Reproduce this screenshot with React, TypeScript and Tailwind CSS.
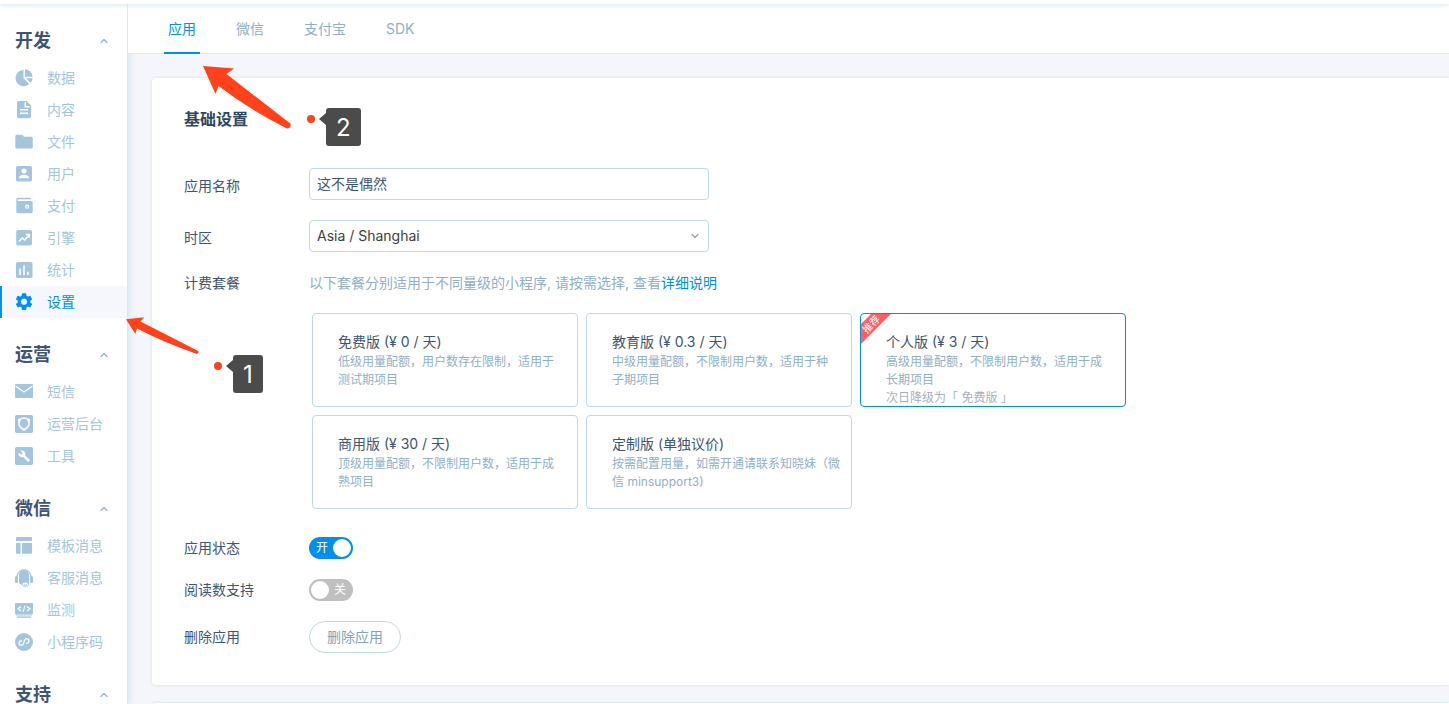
import { useState, type ReactNode } from 'react';
import { ChevronDown, ChevronUp } from 'lucide-react';
import { clsx } from 'clsx';

const icons: Record<string, ReactNode> = {
  data: (
    <>
      <path d="M8.5 1v8.3l5.7 5.7A8.1 8.1 0 1 1 8.5 1z" />
      <path d="M10 .3A8 8 0 0 1 17.6 7.8H10z" />
      <path d="M11 9.3h6.6a8 8 0 0 1-2 4.7z" />
    </>
  ),
  content: (
    <>
      <path d="M3.6 0h8L16 4.5v11a1.7 1.7 0 0 1-1.7 1.7H3.6A1.7 1.7 0 0 1 2 15.5v-14A1.6 1.6 0 0 1 3.6 0z" />
      <path d="M10.3 1.3v4.4h4.4M5 8.8h8M5 12.3h8" fill="none" stroke="#fff" strokeWidth="1.5" />
    </>
  ),
  file: <path d="M2 1.8h5l2 2h7.2a1.6 1.6 0 0 1 1.6 1.6V14a1.6 1.6 0 0 1-1.6 1.6H1.8A1.6 1.6 0 0 1 .3 14V3.4A1.6 1.6 0 0 1 2 1.8z" />,
  user: (
    <>
      <rect x="1" y="1" width="16" height="15.5" rx="1.8" />
      <circle cx="9" cy="6" r="2.5" fill="#fff" />
      <path d="M4 13.200v-.8c0-1.7 3.3-2.6 5-2.6s5 .9 5 2.6v.8z" fill="#fff" />
    </>
  ),
  pay: (
    <>
      <path d="M3 .8h12.5v1.6H3a1 1 0 0 0 0 1.5h13.2a1.5 1.5 0 0 1 1.5 1.5v9.3a1.5 1.5 0 0 1-1.5 1.5H2.8a1.5 1.5 0 0 1-1.500-1.500V2.5A1.7 1.7 0 0 1 3 .8z" />
      <path d="M3 3.2h14" stroke="#fff" strokeWidth="1.2" />
      <circle cx="12.2" cy="9.7" r="1.5" fill="none" stroke="#fff" strokeWidth="1.3" />
    </>
  ),
  engine: (
    <>
      <rect x="1.2" y="1" width="15.8" height="15.5" rx="1.8" />
      <path d="M4 12.5 7.2 9l2.5 2 4.300-4.800M10.800 5.500h3.500v3.200" fill="none" stroke="#fff" strokeWidth="1.5" />
    </>
  ),
  stats: (
    <>
      <rect x="1" y="1" width="16.5" height="16" rx="1.8" />
      <path d="M5 7.500v6.500M9 4.500v9.500M13 10.800v3.200" stroke="#fff" strokeWidth="1.6" />
    </>
  ),
  settings: (
    <path
      transform="translate(-1.4 -1.8) scale(.87)"
      d="M19.140 12.940c.04-.3.06-.61.06-.94 0-.32-.02-.64-.07-.94l2.030-1.580c.18-.14.23-.41.12-.61l-1.920-3.320c-.12-.22-.37-.29-.59-.22l-2.390.96c-.5-.38-1.030-.7-1.620-.94l-.36-2.540c-.04-.24-.24-.41-.48-.41h-3.840c-.24 0-.43.17-.47.41l-.36 2.540c-.59.24-1.130.57-1.620.94l-2.390-.96c-.22-.08-.47 0-.59.22L2.740 8.870c-.12.21-.08.47.12.61l2.030 1.580c-.05.3-.09.63-.09.94s.02.64.07.94l-2.030 1.580c-.18.14-.23.41-.12.61l1.920 3.320c.12.22.37.29.59.22l2.390-.96c.5.38 1.030.7 1.620.94l.36 2.540c.05.24.24.41.48.41h3.840c.24 0 .44-.17.47-.41l.36-2.540c.59-.24 1.130-.56 1.620-.94l2.390.96c.22.08.47 0 .59-.22l1.920-3.320c.12-.22.07-.47-.12-.61l-2.010-1.580zM12 15.600c-1.980 0-3.600-1.620-3.600-3.600s1.620-3.600 3.600-3.600 3.600 1.620 3.600 3.600-1.620 3.600-3.600 3.600z"
    />
  ),
  sms: (
    <>
      <rect y="1" width="18" height="14" rx="1" />
      <path d="M.5 3 9 9l8.500-6" fill="none" stroke="#fff" strokeWidth="1.2" />
    </>
  ),
  admin: (
    <>
      <rect width="18" height="18" rx="1.8" />
      <path d="M5 4.500C2.500 8 4 13 9 14.500c5-1.500 6.500-6.500 4-10C11 2.500 7 2.500 5 4.500z" fill="none" stroke="#fff" strokeWidth="1.4" />
      <circle cx="4.400" cy="5" r="1.500" fill="#fff" />
      <circle cx="13.600" cy="5" r="1.500" fill="#fff" />
      <circle cx="9" cy="14.500" r="1.600" fill="#fff" />
    </>
  ),
  tool: (
    <>
      <rect width="18" height="18" rx="1.8" />
      <path
        transform="translate(3 3) scale(.52)"
        fill="#fff"
        d="M22.700 19l-9.100-9.100c.9-2.300.4-5-1.500-6.900-2-2-5-2.400-7.400-1.300L9 6 6 9 1.600 4.700C.4 7.100.9 10.100 2.900 12.100c1.900 1.900 4.600 2.400 6.900 1.500l9.100 9.100c.4.4 1 .4 1.400 0l2.300-2.300c.5-.4.5-1.100.1-1.400z"
      />
    </>
  ),
  template: (
    <>
      <path d="M2 0h14a1 1 0 0 1 1 1v3H1V1a1 1 0 0 1 1-1z" />
      <path d="M1 6h4.500v10.800H2a1 1 0 0 1-1-1z" />
      <path d="M7 6h10v9.800a1 1 0 0 1-1 1H7z" />
    </>
  ),
  service: (
    <>
      <path d="M4 6a5 5 0 0 1 10 0v8.500c-1 .8-2 1-3 1H7c-1.800 0-3-1-3-2.500z" />
      <path d="M2 8C2 3.800 5 .8 9 .8S16 3.800 16 8" fill="none" stroke="currentColor" strokeWidth="1.2" />
      <rect y="7" width="3" height="7" rx="1.3" />
      <rect x="15" y="7" width="3" height="7" rx="1.3" />
      <ellipse cx="10.500" cy="15.200" rx="3.300" ry="2.200" fill="#fff" stroke="currentColor" />
      <path d="M8.800 15.600c1 .8 2.400.7 3.400-.8" fill="none" stroke="currentColor" />
    </>
  ),
  monitor: (
    <>
      <rect y="2" width="18" height="11.5" rx="1" />
      <path d="M6 5.500 3 7.800 6 10M12 5.500l3 2.300-3 2.200M9.800 4.800 8.200 10.800" fill="none" stroke="#fff" strokeWidth="1.1" />
      <path d="M1 13.500h16v2H1z" opacity=".5" />
      <path d="M2 15.500h14v1.300H2z" />
    </>
  ),
  qrcode: (
    <>
      <circle cx="9" cy="9" r="9" />
      <path
        d="M6.300 8.900a2.200 2.200 0 1 0 2.700 2.200V6.900a2.200 2.200 0 1 1 2.700 2.200"
        transform="rotate(22 9 9)"
        fill="none"
        stroke="#fff"
        strokeWidth="1.3"
        strokeLinecap="round"
      />
    </>
  ),
};

const groups = [
  {
    title: '开发',
    items: [
      ['data', '数据'],
      ['content', '内容'],
      ['file', '文件'],
      ['user', '用户'],
      ['pay', '支付'],
      ['engine', '引擎'],
      ['stats', '统计'],
      ['settings', '设置'],
    ],
  },
  {
    title: '运营',
    items: [
      ['sms', '短信'],
      ['admin', '运营后台'],
      ['tool', '工具'],
    ],
  },
  {
    title: '微信',
    items: [
      ['template', '模板消息'],
      ['service', '客服消息'],
      ['monitor', '监测'],
      ['qrcode', '小程序码'],
    ],
  },
  { title: '支持', items: [] },
];

const tabs = ['应用', '微信', '支付宝', 'SDK'];

const plans = [
  { id: 'free', name: '免费版 (¥ 0 / 天)', desc: '低级用量配额，用户数存在限制，适用于\n测试期项目' },
  { id: 'edu', name: '教育版 (¥ 0.3 / 天)', desc: '中级用量配额，不限制用户数，适用于种\n子期项目' },
  { id: 'personal', name: '个人版 (¥ 3 / 天)', desc: '高级用量配额，不限制用户数，适用于成\n长期项目', note: '次日降级为「 免费版 」', recommended: true },
  { id: 'business', name: '商用版 (¥ 30 / 天)', desc: '顶级用量配额，不限制用户数，适用于成\n熟项目' },
  { id: 'custom', name: '定制版 (单独议价)', desc: '按需配置用量，如需开通请联系知晓妹（微\n信 minsupport3)' },
];

function Sidebar() {
  return (
    <nav className="relative w-32 shrink-0 border-r border-[#dce6ee] bg-white shadow-[2px_0_6px_#d5e6f2]">
      {groups.map((group) => (
        <section key={group.title} className="pt-4">
          <button type="button" className="flex h-[42px] w-full items-center justify-between pr-[17px] pl-[15px] text-lg font-bold text-[#3e5573]">
            {group.title}
            <ChevronUp className="size-3 text-[#94bdd8]" strokeWidth={3} />
          </button>
          <ul>
            {group.items.map(([icon, label]) => {
              const active = icon === 'settings';
              return (
                <li key={icon}>
                  <a
                    href={`#${icon}`}
                    className={clsx(
                      'flex h-8 items-center gap-3.5 border-l-2 pl-[13px] text-sm',
                      active ? 'border-[#0090f0] bg-[#f5f7fc] text-[#0090f0]' : 'border-transparent text-[#a3c6de]'
                    )}
                  >
                    <svg viewBox="0 0 18 18" className="size-[18px] shrink-0" fill="currentColor" aria-hidden="true">
                      {icons[icon]}
                    </svg>
                    {label}
                  </a>
                </li>
              );
            })}
          </ul>
        </section>
      ))}
    </nav>
  );
}

function Tabs() {
  return (
    <div className="relative flex h-[50px] gap-8 border-b border-[#dfe6ed] bg-white pl-9 text-sm">
      {tabs.map((tab, i) => (
        <a
          key={tab}
          href={`#${tab}`}
          className={clsx(
            '-mb-px flex items-center border-b-2 px-1 pt-0.5',
            i === 0 ? 'border-[#0090ea] text-[#0090ea]' : 'border-transparent text-[#8fb0c8]'
          )}
        >
          {tab}
        </a>
      ))}
    </div>
  );
}

function PlanOption({ plan, checked, onSelect }: { plan: (typeof plans)[number]; checked: boolean; onSelect: () => void }) {
  return (
    <label
      className={clsx(
        'relative h-[94px] w-[266px] cursor-pointer overflow-hidden rounded border pt-[17px] pr-2 pl-[25px]',
        checked ? 'border-[#0090ea]' : 'border-[#bfd8e8]'
      )}
    >
      <input type="radio" name="plan" checked={checked} onChange={onSelect} className="sr-only" />
      {plan.recommended && (
        <span className="absolute top-[3px] -left-5 h-3.5 w-[60px] -rotate-45 bg-[#ff5f62] text-center text-[10px] leading-[14px] text-white">
          推荐
        </span>
      )}
      <span className="block text-sm leading-[22px] text-[#3e5573]">{plan.name}</span>
      <span className="block text-xs leading-[18px] whitespace-pre-line text-[#8fb0c8]">{plan.desc}</span>
      {plan.note && <span className="block text-xs leading-[18px] text-[#a6b0bd]">{plan.note}</span>}
    </label>
  );
}

function Switch({ id, checked, onChange }: { id: string; checked: boolean; onChange: (v: boolean) => void }) {
  return (
    <label className={clsx('relative flex h-[22px] w-11 cursor-pointer items-center rounded-full text-xs text-white', checked ? 'bg-[#0090ea]' : 'bg-[#bfbfbf]')}>
      <input id={id} type="checkbox" role="switch" checked={checked} onChange={(e) => onChange(e.target.checked)} className="sr-only" />
      <span className={clsx('w-full px-[7px]', !checked && 'text-right')}>{checked ? '开' : '关'}</span>
      <span className={clsx('absolute size-[18px] rounded-full bg-white', checked ? 'right-0.5' : 'left-0.5')} />
    </label>
  );
}

function Row({ label, htmlFor, className, labelClass, children }: { label: string; htmlFor?: string; className?: string; labelClass?: string; children: ReactNode }) {
  return (
    <div className={clsx('flex items-center', className)}>
      <label htmlFor={htmlFor} className={clsx('w-[125px] shrink-0 text-sm text-[#3e5573]', labelClass)}>
        {label}
      </label>
      {children}
    </div>
  );
}

function Callout({ text, className }: { text: string; className: string }) {
  return (
    <div className={clsx('absolute flex items-start', className)}>
      <span className="mt-[7px] size-2 rounded-full bg-[#ff421c]" />
      <svg viewBox="0 0 7 12" className="mt-[5px] ml-1 h-3 w-[7px]" fill="#4b4b4b">
        <path d="M7 0v12L0 6z" />
      </svg>
      <span className="flex h-[38px] items-center rounded-[3px] bg-[#4b4b4b] px-2.5 pt-0.5 text-2xl text-white">{text}</span>
    </div>
  );
}

export default function App() {
  const [name, setName] = useState('这不是偶然');
  const [plan, setPlan] = useState('personal');
  const [enabled, setEnabled] = useState(true);
  const [readCount, setReadCount] = useState(false);

  return (
    <div className="relative flex h-screen flex-col overflow-hidden bg-[#f4f6fb] font-[Inter,'Noto_Sans_CJK_SC',sans-serif]">
      <header className="relative z-20 h-1 shrink-0 bg-white shadow-[0_1px_5px_#cfe0ec]" />
      <div className="flex min-h-0 flex-1">
        <Sidebar />
        <div className="min-w-0 flex-1">
          <Tabs />
          <main className="pt-6 pl-6">
            <section className="rounded-l bg-white px-8 pt-[29px] pb-8 shadow-[0_0_3px_#c8dcea]">
              <h2 className="text-base leading-6 font-bold text-[#2f4661]">基础设置</h2>
              <Row label="应用名称" htmlFor="app-name" className="mt-[37px]" labelClass="pt-1">
                <input
                  id="app-name"
                  value={name}
                  onChange={(e) => setName(e.target.value)}
                  className="h-8 w-[400px] rounded border border-[#bfd8e8] px-[7px] pb-0.5 text-sm text-[#3e5573]"
                />
              </Row>
              <Row label="时区" htmlFor="timezone" className="mt-5" labelClass="pt-1">
                <div className="relative w-[400px]">
                  <select id="timezone" className="h-8 w-full appearance-none rounded border border-[#bfd8e8] bg-white px-[7px] text-sm text-[#404040]">
                    <option>Asia / Shanghai</option>
                  </select>
                  <ChevronDown className="pointer-events-none absolute top-2.5 right-2 size-3 text-[#a0a0a0]" strokeWidth={2.5} />
                </div>
              </Row>
              <Row label="计费套餐" className="mt-5">
                <p className="text-sm leading-[22px] text-[#8fb0c8]">
                  以下套餐分别适用于不同量级的小程序, 请按需选择, 查看
                  <a href="#pricing" className="text-[#0090ea]">详细说明</a>
                </p>
              </Row>
              <div className="mt-[19px] ml-32 flex max-w-[840px] flex-wrap gap-2">
                {plans.map((p) => (
                  <PlanOption key={p.id} plan={p} checked={plan === p.id} onSelect={() => setPlan(p.id)} />
                ))}
              </div>
              <Row label="应用状态" htmlFor="app-status" className="mt-7">
                <Switch id="app-status" checked={enabled} onChange={setEnabled} />
              </Row>
              <Row label="阅读数支持" htmlFor="read-count" className="mt-5">
                <Switch id="read-count" checked={readCount} onChange={setReadCount} />
              </Row>
              <Row label="删除应用" htmlFor="delete-app" className="mt-5">
                <button id="delete-app" type="button" className="h-8 rounded-full border border-[#bfd8e8] px-[17px] text-sm text-[#7fa5c0]">
                  删除应用
                </button>
              </Row>
            </section>
            <section className="mt-[18px] h-40 rounded-l bg-white shadow-[0_0_3px_#c8dcea]" />
          </main>
        </div>
      </div>

      <div className="pointer-events-none absolute inset-0 z-30">
        <svg width="300" height="360" className="absolute top-0 left-0" fill="#ff421c">
          <path d="M203 66 234 68.500 226.500 74 289 122.500A3 3 0 0 1 286 128Q250 110 218.500 86L215.500 94z" />
          <path d="M126 319.300 144 317.300 140.500 321.500 197.300 350.500A1.600 1.600 0 0 1 196.300 353.700Q165 343 137 328.500L135.300 334z" />
        </svg>
        <Callout text="2" className="top-[108px] left-[307px]" />
        <Callout text="1" className="top-[355px] left-[214px]" />
      </div>
    </div>
  );
}
